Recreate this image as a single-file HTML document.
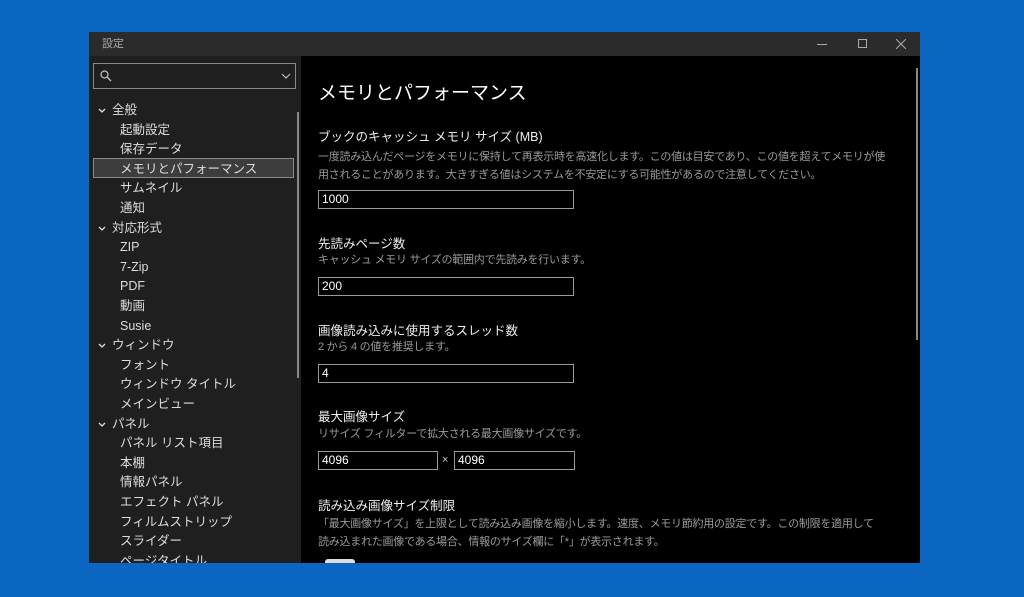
<!DOCTYPE html>
<html><head><meta charset="utf-8"><style>
*{margin:0;padding:0;box-sizing:border-box}
body{width:1024px;height:597px;background:#0a66c0;overflow:hidden;position:relative;font-family:"Liberation Sans","Noto Sans CJK JP",sans-serif;color:#fff}
.win{position:absolute;left:89px;top:32px;width:831px;height:531px;background:#000;overflow:hidden}
.title{position:absolute;left:0;top:0;width:831px;height:24px;background:#2b2b2b;color:#aaa;font-size:11px;line-height:24px;padding-left:13px}
.side{position:absolute;left:0;top:24px;width:212px;height:507px;background:#1f1f1f;overflow:hidden}
.search{position:absolute;left:4px;top:7px;width:203px;height:26px;border:1px solid #888}
.it{position:absolute;font-size:12.5px;color:#ddd;white-space:nowrap;line-height:19px}
.sel{position:absolute;left:4px;width:201px;height:20px;background:#3d3d3d;border:1px solid #888}
.content{position:absolute;left:212px;top:24px;width:619px;height:507px}
.h{position:absolute;left:17px;top:22px;font-size:19px;color:#fff}
.l{position:absolute;left:17px;font-size:12.5px;color:#eee}
.d{position:absolute;left:17px;font-size:11px;letter-spacing:-0.25px;color:#9a9a9a;line-height:18px;white-space:nowrap}
.in{position:absolute;height:19px;border:1px solid #9a9a9a;font-size:12px;color:#fff;line-height:17px;padding-left:3px;background:#000}
</style></head><body>
<div class="win">
<div class="title">設定
<svg style="position:absolute;left:728px;top:8px" width="10" height="10"><line x1="0" y1="4.5" x2="10" y2="4.5" stroke="#aaa"/></svg>
<svg style="position:absolute;left:769px;top:7px" width="10" height="10"><rect x="0.5" y="0.5" width="8" height="8" fill="none" stroke="#aaa"/></svg>
<svg style="position:absolute;left:807px;top:7px" width="10" height="10"><path d="M0 0L10 10M10 0L0 10" stroke="#aaa"/></svg>
</div>
<div class="side">
<div class="search">
<svg style="position:absolute;left:6px;top:6px" width="12" height="12"><circle cx="4.5" cy="4.5" r="3.5" fill="none" stroke="#bbb" stroke-width="1.3"/><line x1="7" y1="7" x2="11" y2="11" stroke="#bbb" stroke-width="1.5"/></svg>
<svg style="position:absolute;left:187px;top:9px" width="10" height="7"><path d="M1 1L5 5L9 1" fill="none" stroke="#bbb" stroke-width="1.2"/></svg>
</div>
<div class="sel" style="top:102px"></div>
<div style="position:absolute;left:208px;top:56px;width:2px;height:266px;background:#888"></div>
</div>
<div class="content">
<div class="h">メモリとパフォーマンス</div>
<div style="position:absolute;left:615px;top:12px;width:2px;height:272px;background:#888"></div>
<div class="l" style="top:70px">ブックのキャッシュ メモリ サイズ (MB)</div>
<div class="d" style="top:92px">一度読み込んだページをメモリに保持して再表示時を高速化します。この値は目安であり、この値を超えてメモリが使<br>用されることがあります。大きすぎる値はシステムを不安定にする可能性があるので注意してください。</div>
<div class="in" style="left:17px;top:134px;width:256px">1000</div>
<div class="l" style="top:177px">先読みページ数</div>
<div class="d" style="top:195px">キャッシュ メモリ サイズの範囲内で先読みを行います。</div>
<div class="in" style="left:17px;top:221px;width:256px">200</div>
<div class="l" style="top:264px">画像読み込みに使用するスレッド数</div>
<div class="d" style="top:282px">2 から 4 の値を推奨します。</div>
<div class="in" style="left:17px;top:308px;width:256px">4</div>
<div class="l" style="top:350px">最大画像サイズ</div>
<div class="d" style="top:369px">リサイズ フィルターで拡大される最大画像サイズです。</div>
<div class="in" style="left:17px;top:395px;width:120px">4096</div>
<div style="position:absolute;left:141px;top:398px;font-size:11px;color:#ccc">×</div>
<div class="in" style="left:153px;top:395px;width:121px">4096</div>
<div class="l" style="top:439px">読み込み画像サイズ制限</div>
<div class="d" style="top:459px">「最大画像サイズ」を上限として読み込み画像を縮小します。速度、メモリ節約用の設定です。この制限を適用して<br>読み込まれた画像である場合、情報のサイズ欄に「*」が表示されます。</div>
<div style="position:absolute;left:24px;top:503px;width:30px;height:6px;border-radius:3px 3px 0 0;background:#ddd"></div>
</div>
<div style="position:absolute;left:0;top:2px">
<svg style="position:absolute;left:9px;top:74px" width="8" height="6"><path d="M1 1L4 4L7 1" fill="none" stroke="#ddd" stroke-width="1.3"/></svg>
<div class="it" style="left:23px;top:67px">全般</div>
<div class="it" style="left:31px;top:87px">起動設定</div>
<div class="it" style="left:31px;top:106px">保存データ</div>
<div class="it" style="left:31px;top:126px">メモリとパフォーマンス</div>
<div class="it" style="left:31px;top:145px">サムネイル</div>
<div class="it" style="left:31px;top:165px">通知</div>
<svg style="position:absolute;left:9px;top:192px" width="8" height="6"><path d="M1 1L4 4L7 1" fill="none" stroke="#ddd" stroke-width="1.3"/></svg>
<div class="it" style="left:23px;top:185px">対応形式</div>
<div class="it" style="left:31px;top:204px">ZIP</div>
<div class="it" style="left:31px;top:224px">7-Zip</div>
<div class="it" style="left:31px;top:243px">PDF</div>
<div class="it" style="left:31px;top:263px">動画</div>
<div class="it" style="left:31px;top:283px">Susie</div>
<svg style="position:absolute;left:9px;top:309px" width="8" height="6"><path d="M1 1L4 4L7 1" fill="none" stroke="#ddd" stroke-width="1.3"/></svg>
<div class="it" style="left:23px;top:302px">ウィンドウ</div>
<div class="it" style="left:31px;top:322px">フォント</div>
<div class="it" style="left:31px;top:341px">ウィンドウ タイトル</div>
<div class="it" style="left:31px;top:361px">メインビュー</div>
<svg style="position:absolute;left:9px;top:388px" width="8" height="6"><path d="M1 1L4 4L7 1" fill="none" stroke="#ddd" stroke-width="1.3"/></svg>
<div class="it" style="left:23px;top:381px">パネル</div>
<div class="it" style="left:31px;top:400px">パネル リスト項目</div>
<div class="it" style="left:31px;top:420px">本棚</div>
<div class="it" style="left:31px;top:439px">情報パネル</div>
<div class="it" style="left:31px;top:459px">エフェクト パネル</div>
<div class="it" style="left:31px;top:479px">フィルムストリップ</div>
<div class="it" style="left:31px;top:498px">スライダー</div>
<div class="it" style="left:31px;top:518px">ページタイトル</div>
</div>
</div>
</body></html>
